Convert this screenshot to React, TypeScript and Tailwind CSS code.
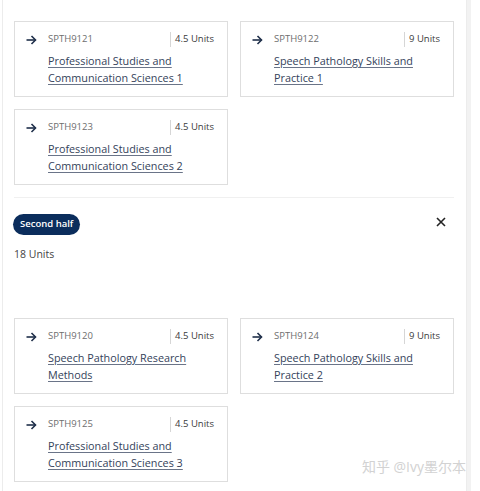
import React from "react";

type Course = { code: string; units: string; title: string[] };

const first: Course[] = [
  { code: "SPTH9121", units: "4.5 Units", title: ["Professional Studies and", "Communication Sciences 1"] },
  { code: "SPTH9122", units: "9 Units", title: ["Speech Pathology Skills and", "Practice 1"] },
  { code: "SPTH9123", units: "4.5 Units", title: ["Professional Studies and", "Communication Sciences 2"] },
];

const second: Course[] = [
  { code: "SPTH9120", units: "4.5 Units", title: ["Speech Pathology Research", "Methods"] },
  { code: "SPTH9124", units: "9 Units", title: ["Speech Pathology Skills and", "Practice 2"] },
  { code: "SPTH9125", units: "4.5 Units", title: ["Professional Studies and", "Communication Sciences 3"] },
];

function Arrow() {
  return (
    <svg width="11" height="10" viewBox="0 0 11 10" fill="none" stroke="#1f2f4a" strokeWidth="1.6">
      <path d="M0.5 5H9.5" />
      <path d="M5.5 1L9.5 5L5.5 9" />
    </svg>
  );
}

function Card({ c }: { c: Course }) {
  return (
    <div className="h-[76px] border border-[#dedede] bg-white flex pl-[11px] pr-[13px] pt-[10px]">
      <div className="w-[22px] pt-[3px]">
        <Arrow />
      </div>
      <div className="flex-1">
        <div className="flex items-center h-[15px]">
          <span className="flex-1 text-[9.5px] text-[#6e6e6e]">{c.code}</span>
          <span className="border-l border-[#d6d6d6] h-[15px] pl-[4px] flex items-center text-[9.5px] text-[#3a3a3a]">
            {c.units}
          </span>
        </div>
        <div className="mt-[5px] text-[10.8px] leading-[17px] text-[#34425a] underline underline-offset-[2px] decoration-[#6a7488]">
          {c.title.map((t) => (
            <div key={t}>{t}</div>
          ))}
        </div>
      </div>
    </div>
  );
}

function Grid({ list }: { list: Course[] }) {
  return (
    <div className="grid grid-cols-[214px_214px] gap-x-[12px] gap-y-[12px]">
      {list.map((c) => (
        <Card key={c.code} c={c} />
      ))}
    </div>
  );
}

export default function App() {
  return (
    <div
      className="relative w-[480px] h-[491px] bg-white overflow-hidden flex"
      style={{ fontFamily: "'Open Sans', 'Noto Sans CJK SC', sans-serif" }}
    >
      <div className="w-[2px]" />
      <div className="w-[465px] h-full border-l border-r border-[#ececec] pl-[11px] pt-[21px]">
        <Grid list={first} />
        <div className="mt-[12px] w-[440px] border-t border-[#f0f0f0]" />
        <div className="mt-[16px] w-[440px] flex items-center justify-between">
          <span className="ml-[-1px] h-[21px] px-[7px] rounded-full bg-[#0b2d5c] text-white text-[9.5px] font-semibold flex items-center">
            Second half
          </span>
          <svg width="10" height="10" viewBox="0 0 10 10" stroke="#222" strokeWidth="1.6" className="mr-[8px] -mt-[6px]">
            <path d="M1 1L9 9M9 1L1 9" />
          </svg>
        </div>
        <div className="mt-[12px] text-[10.5px] text-[#444]">18 Units</div>
        <div className="mt-[55px]">
          <Grid list={second} />
        </div>
      </div>
      <div className="w-[4px] bg-[#f2f2f2]" />
      <div className="absolute right-[14px] bottom-[14px] text-[14px] text-[#d2d2d2]">
        知乎 @Ivy墨尔本
      </div>
    </div>
  );
}
